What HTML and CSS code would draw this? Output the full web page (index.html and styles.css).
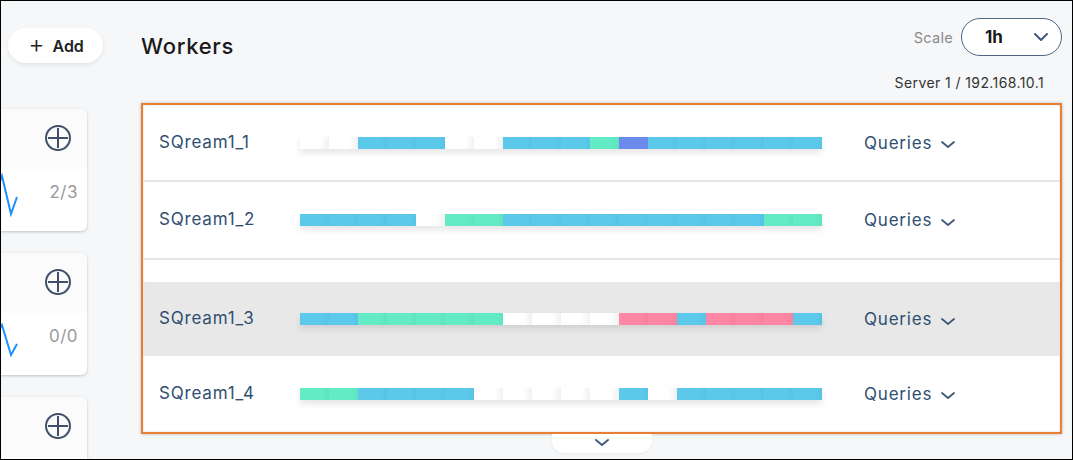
FILE: index.html
```html
<!DOCTYPE html>
<html>
<head>
<meta charset="utf-8">
<link rel="stylesheet" href="styles.css">
</head>
<body>
<div class="frame">
  <aside class="sidebar">
    <button class="add-btn"><span class="add-plus">+</span><span>Add</span></button>
    <div class="card">
      <div class="card-top">
        <svg class="circ-plus" width="28" height="28" viewBox="0 0 28 28"><circle cx="14" cy="14" r="12" fill="none" stroke="#3f5168" stroke-width="2"/><path d="M14 4v20M4 14h20" stroke="#3f5168" stroke-width="2"/></svg>
      </div>
      <div class="card-bottom">
        <svg class="spark" width="112" height="60" viewBox="0 0 112 60"><polyline points="86,34 96,7 105,45 111,28" fill="none" stroke="#1e8fff" stroke-width="2"/></svg>
        <span class="count">2/3</span>
      </div>
    </div>
    <div class="card">
      <div class="card-top">
        <svg class="circ-plus" width="28" height="28" viewBox="0 0 28 28"><circle cx="14" cy="14" r="12" fill="none" stroke="#3f5168" stroke-width="2"/><path d="M14 4v20M4 14h20" stroke="#3f5168" stroke-width="2"/></svg>
      </div>
      <div class="card-bottom">
        <svg class="spark" width="112" height="60" viewBox="0 0 112 60"><polyline points="86,30 96,12 105,42 111,31" fill="none" stroke="#1e8fff" stroke-width="2"/></svg>
        <span class="count">0/0</span>
      </div>
    </div>
    <div class="card">
      <div class="card-top">
        <svg class="circ-plus" width="28" height="28" viewBox="0 0 28 28"><circle cx="14" cy="14" r="12" fill="none" stroke="#3f5168" stroke-width="2"/><path d="M14 4v20M4 14h20" stroke="#3f5168" stroke-width="2"/></svg>
      </div>
    </div>
  </aside>

  <main class="main">
    <div class="header">
      <h1 class="title">Workers</h1>
      <div class="scale">
        <span class="scale-label">Scale</span>
        <div class="select"><span class="select-val">1h</span>
          <svg width="16" height="10" viewBox="0 0 16 10"><path d="M2 2l6 6 6-6" fill="none" stroke="#3f5a78" stroke-width="2" stroke-linecap="round" stroke-linejoin="round"/></svg>
        </div>
      </div>
    </div>
    <div class="server">Server 1 / 192.168.10.1</div>

    <div class="panel">
      <div class="row">
        <span class="name">SQream1_1</span>
        <div class="bar">
          <i class="w"></i><i class="w"></i><i class="b"></i><i class="b"></i><i class="b"></i><i class="w"></i><i class="w"></i><i class="b"></i><i class="b"></i><i class="b"></i><i class="g"></i><i class="p"></i><i class="b"></i><i class="b"></i><i class="b"></i><i class="b"></i><i class="b"></i><i class="b"></i>
        </div>
        <span class="queries">Queries <svg width="16" height="9" viewBox="0 0 16 9"><path d="M2 2l6 5 6-5" fill="none" stroke="#3f5a78" stroke-width="1.8" stroke-linecap="round" stroke-linejoin="round"/></svg></span>
      </div>
      <div class="divider"></div>
      <div class="row row-2">
        <span class="name">SQream1_2</span>
        <div class="bar">
          <i class="b"></i><i class="b"></i><i class="b"></i><i class="b"></i><i class="w"></i><i class="g"></i><i class="g"></i><i class="b"></i><i class="b"></i><i class="b"></i><i class="b"></i><i class="b"></i><i class="b"></i><i class="b"></i><i class="b"></i><i class="b"></i><i class="g"></i><i class="g"></i>
        </div>
        <span class="queries">Queries <svg width="16" height="9" viewBox="0 0 16 9"><path d="M2 2l6 5 6-5" fill="none" stroke="#3f5a78" stroke-width="1.8" stroke-linecap="round" stroke-linejoin="round"/></svg></span>
      </div>
      <div class="divider"></div>
      <div class="spacer"></div>
      <div class="row row-active">
        <span class="name">SQream1_3</span>
        <div class="bar">
          <i class="b"></i><i class="b"></i><i class="g"></i><i class="g"></i><i class="g"></i><i class="g"></i><i class="g"></i><i class="w"></i><i class="w"></i><i class="w"></i><i class="w"></i><i class="r"></i><i class="r"></i><i class="b"></i><i class="r"></i><i class="r"></i><i class="r"></i><i class="b"></i>
        </div>
        <span class="queries">Queries <svg width="16" height="9" viewBox="0 0 16 9"><path d="M2 2l6 5 6-5" fill="none" stroke="#3f5a78" stroke-width="1.8" stroke-linecap="round" stroke-linejoin="round"/></svg></span>
      </div>
      <div class="row">
        <span class="name">SQream1_4</span>
        <div class="bar">
          <i class="g"></i><i class="g"></i><i class="b"></i><i class="b"></i><i class="b"></i><i class="b"></i><i class="w"></i><i class="w"></i><i class="w"></i><i class="w"></i><i class="w"></i><i class="b"></i><i class="w"></i><i class="b"></i><i class="b"></i><i class="b"></i><i class="b"></i><i class="b"></i>
        </div>
        <span class="queries">Queries <svg width="16" height="9" viewBox="0 0 16 9"><path d="M2 2l6 5 6-5" fill="none" stroke="#3f5a78" stroke-width="1.8" stroke-linecap="round" stroke-linejoin="round"/></svg></span>
      </div>
    </div>
    <div class="more-tab">
      <svg width="16" height="9" viewBox="0 0 16 9"><path d="M2 2l6 5 6-5" fill="none" stroke="#3f5a78" stroke-width="2" stroke-linecap="round" stroke-linejoin="round"/></svg>
    </div>
  </main>
</div>
</body>
</html>
```

FILE: styles.css
```css
* { box-sizing: border-box; }
html, body { margin: 0; padding: 0; }
body {
  width: 1073px;
  height: 460px;
  overflow: hidden;
  font-family: "Inter", "Open Sans", sans-serif;
  background: #fff;
}
.frame {
  width: 1073px;
  height: 460px;
  border: 1px solid #000;
  background: #f6f7f9;
  display: grid;
  grid-template-columns: 140px 1fr;
  overflow: hidden;
}

/* Sidebar */
.sidebar {
  display: flex;
  flex-direction: column;
  align-items: flex-start;
  padding-top: 27px;
  overflow: hidden;
}
.add-btn {
  flex: none;
  margin-left: 7px;
  width: 95px;
  height: 35px;
  border: none;
  border-radius: 18px;
  background: #fff;
  box-shadow: 0 2px 4px rgba(0,0,0,0.08);
  display: flex;
  align-items: center;
  justify-content: center;
  gap: 8px;
  font-family: "Inter", sans-serif;
  font-size: 16px;
  font-weight: 600;
  color: #222;
  padding: 0 0 0 1px;
}
.add-plus { font-size: 25px; font-weight: 300; line-height: 1; margin-top: -3px; }
.card {
  flex: none;
  margin-left: -95px;
  width: 181px;
  height: 122px;
  background: #fff;
  border-radius: 6px;
  box-shadow: 0 1px 3px rgba(0,0,0,0.22);
  margin-top: 22px;
  display: flex;
  flex-direction: column;
}
.card:first-of-type { margin-top: 46px; }
.card-top {
  height: 60px;
  background: #fbfbfb;
  border-radius: 6px 6px 0 0;
  display: flex;
  justify-content: flex-end;
  padding: 15px 15px 0 0;
}
.card-bottom {
  display: flex;
  align-items: flex-start;
}
.spark { flex: none; }
.count {
  margin-left: auto;
  margin-right: 9px;
  margin-top: 12px;
  font-size: 17px;
  color: #9a9a9a;
  line-height: 22px;
  letter-spacing: 0.5px;
}

/* Main */
.main {
  padding-right: 10px;
  display: flex;
  flex-direction: column;
}
.header {
  display: flex;
  justify-content: space-between;
  align-items: flex-start;
}
.title {
  margin: 31px 0 0 0;
  font-size: 22px;
  line-height: 28px;
  font-weight: 500;
  color: #1a1a1a;
  letter-spacing: 0.7px;
}
.scale {
  margin-top: 17px;
  display: flex;
  align-items: center;
  gap: 8px;
}
.scale-label { font-size: 14.5px; color: #8a8a8a; letter-spacing: 0.3px; }
.select {
  width: 101px;
  height: 38px;
  border: 1px solid #4d6682;
  border-radius: 19px;
  background: #fff;
  display: flex;
  align-items: center;
  justify-content: space-between;
  padding: 0 12px 0 23px;
}
.select-val { font-size: 17px; font-weight: 700; color: #1a1a1a; }
.server {
  align-self: flex-end;
  margin: 15px 18px 0 0;
  font-size: 14px;
  line-height: 16px;
  color: #333;
  letter-spacing: 0.4px;
}
.panel {
  margin-top: 12px;
  border: 2px solid #ea7f33;
  background: #fff;
  box-shadow: 0 0 3px rgba(0,0,0,0.25), inset 0 0 2px rgba(0,0,0,0.18);
  height: 331px;
  overflow: hidden;
  display: flex;
  flex-direction: column;
}
.row {
  flex: none;
  height: 75px;
  display: flex;
  align-items: center;
  padding-left: 16px;
}
.row-2 { height: 76px; }
.row-active { background: #e8e8e8; height: 74px; }
.divider { flex: none; height: 2px; background: #e4e7e7; }
.spacer { flex: none; height: 22px; }
.name {
  width: 141px;
  font-size: 17px;
  color: #2f4f72;
  letter-spacing: 0.8px;
  margin-top: -2px;
}
.bar {
  display: flex;
  height: 12px;
  box-shadow: 0 4px 7px rgba(0,0,0,0.10);
}
.bar i {
  display: block;
  width: 29px;
  height: 12px;
}
.bar i.b { background: linear-gradient(90deg, #5cc9eb 0%, #5cc9eb 75%, #58c3e4 100%); }
.bar i.g { background: linear-gradient(90deg, #63ebc6 0%, #63ebc6 75%, #5fe3bf 100%); }
.bar i.p { background: #6b8aec; }
.bar i.r { background: linear-gradient(90deg, #ff87a3 0%, #ff87a3 75%, #f5829d 100%); }
.bar i.w { background: linear-gradient(90deg, #fff 0%, #fff 70%, #f1f1f1 100%); }
.queries {
  margin-left: 42px;
  display: flex;
  align-items: center;
  gap: 8px;
  font-size: 17px;
  color: #2f4f72;
  letter-spacing: 0.8px;
}
.queries svg { margin-top: 4px; }
.more-tab {
  align-self: center;
  width: 100px;
  height: 19px;
  background: #fff;
  border-radius: 0 0 12px 12px;
  box-shadow: 0 1px 3px rgba(0,0,0,0.06);
  display: flex;
  justify-content: center;
  padding-top: 4px;
}
```
